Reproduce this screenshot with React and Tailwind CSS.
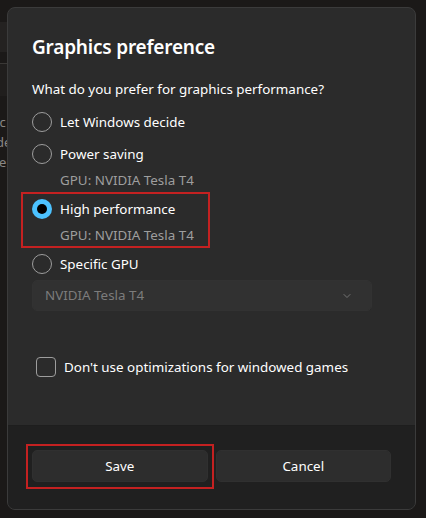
import { ChevronDown } from 'lucide-react';

function Radio({ checked }) {
  if (checked) {
    return (
      <span className="flex h-5 w-5 shrink-0 items-center justify-center rounded-full bg-[#4cc2ff]">
        <span className="h-[10px] w-[10px] rounded-full bg-black" />
      </span>
    );
  }
  return <span className="h-5 w-5 shrink-0 rounded-full border border-[#9d9d9d]" />;
}

function Option({ label, gpu, checked }) {
  return (
    <div className="flex flex-col">
      <div className="flex h-8 items-center gap-2">
        <Radio checked={checked} />
        <span className="text-[13.4px] text-white">{label}</span>
      </div>
      {gpu && <div className="h-[23px] pl-7 text-[13.4px] leading-5 text-[#9e9e9e]">{gpu}</div>}
    </div>
  );
}

export default function App() {
  return (
    <div
      className="relative h-[518px] w-[426px] overflow-hidden bg-[#1b1918] p-[7px] pr-[10px]"
      style={{ fontFamily: '"Noto Sans", "Open Sans", sans-serif' }}
    >
      {/* background window bits peeking out */}
      <div className="absolute left-0 top-[22px] h-[30px] w-[10px] bg-[#242221]" />
      <div className="absolute left-0 top-[63px] h-[33px] w-[10px] border-t border-[#3a3836] bg-[#201e1d]" />
      <div className="absolute left-0 top-[112px] text-[13px] leading-[20px] text-[#8a8785]">
        <div className="-ml-[10px]">v.c</div>
        <div className="-ml-[4px]">de</div>
        <div className="-ml-[1px]">e</div>
      </div>

      <div className="relative flex h-[503px] w-[409px] flex-col overflow-hidden rounded-lg border border-[#3b3b3b] bg-[#2b2b2b]">
        <div className="flex flex-1 flex-col px-6 pt-[25px]">
          <h1 className="text-[19px] font-semibold leading-7 tracking-[-0.2px] text-white">Graphics preference</h1>
          <p className="mt-[18px] text-[13.4px] leading-5 text-white">What do you prefer for graphics performance?</p>
          <div className="mt-[7px] flex flex-col">
            <Option label="Let Windows decide" />
            <Option label="Power saving" gpu="GPU: NVIDIA Tesla T4" />
            <div className="relative">
              <div className="pointer-events-none absolute -left-[11px] -top-[1px] h-[56px] w-[189px] border-2 border-[#c42121]" />
              <Option label="High performance" gpu="GPU: NVIDIA Tesla T4" checked />
            </div>
            <Option label="Specific GPU" />
          </div>
          <div className="flex h-[31px] w-[340px] items-center justify-between rounded-[5px] border border-[#323232] bg-[#313131] pl-3 pr-[18px]">
            <span className="text-[13.4px] text-[#7c7c7c]">NVIDIA Tesla T4</span>
            <ChevronDown size={12} strokeWidth={1.5} className="text-[#8a8a8a]" />
          </div>
          <label className="mt-[46px] ml-1 flex items-center gap-2">
            <span className="h-5 w-5 shrink-0 rounded-[4px] border border-[#9d9d9d]" />
            <span className="text-[13.4px] text-white">Don't use optimizations for windowed games</span>
          </label>
        </div>
        <div className="flex h-[84px] shrink-0 gap-2 border-t border-[#1e1e1e] bg-[#202020] px-6 pt-6">
          <div className="relative flex-1">
            <div className="pointer-events-none absolute -left-[6px] -top-[6px] h-[45px] w-[188px] border-2 border-[#c42121]" />
            <button className="h-8 w-full rounded-[5px] border border-[#303030] bg-[#2d2d2d] text-[13.4px] text-white">Save</button>
          </div>
          <div className="flex-1">
            <button className="h-8 w-full rounded-[5px] border border-[#303030] bg-[#2d2d2d] text-[13.4px] text-white">Cancel</button>
          </div>
        </div>
      </div>
    </div>
  );
}
